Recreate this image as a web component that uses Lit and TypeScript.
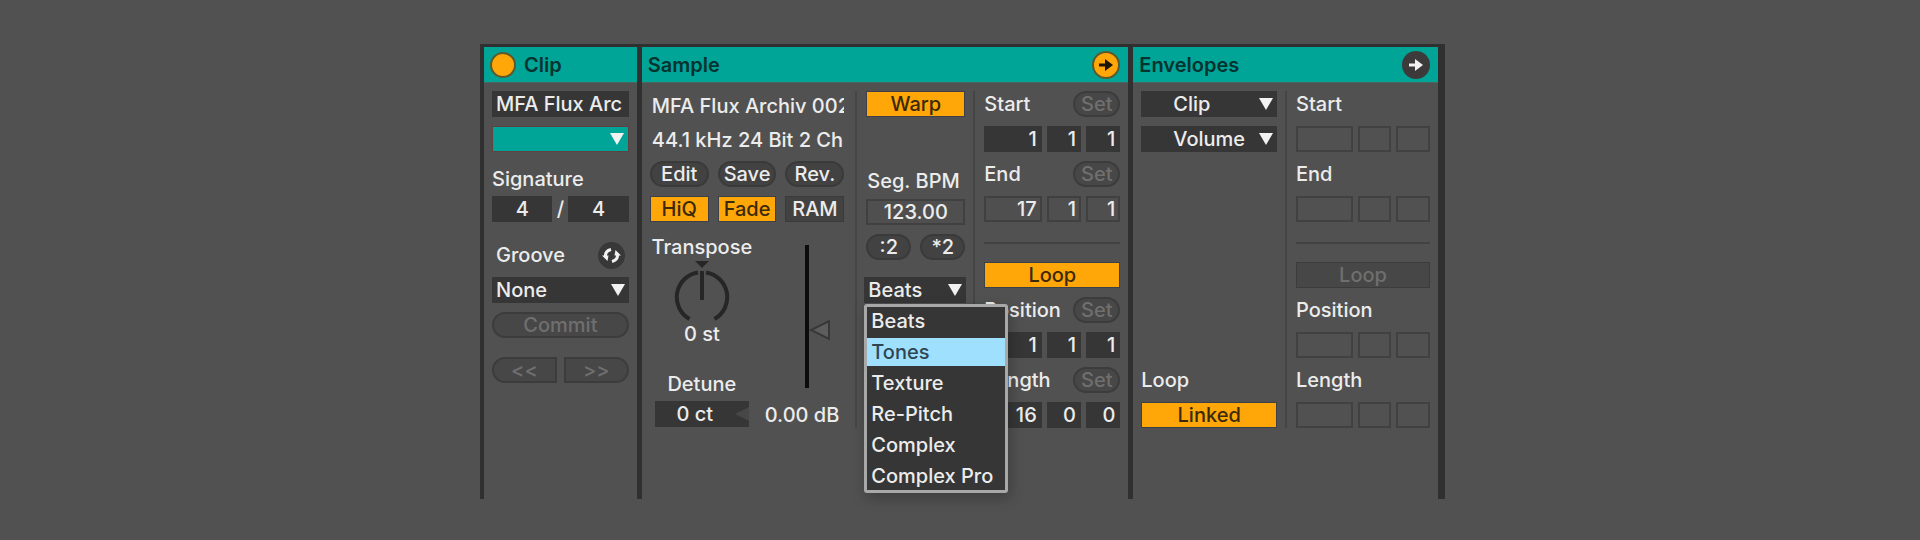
import { LitElement, html, css, svg, nothing } from "lit";
import { customElement, state } from "lit/decorators.js";

const WARP_MODES = ["Beats", "Tones", "Texture", "Re-Pitch", "Complex", "Complex Pro"];

const arrowDown = html`<svg class="arrow" viewBox="0 0 14 12" aria-hidden="true"><path d="M0 0h14L7 12z" fill="#f2f2f2" /></svg>`;

const arrowRight = (fill: string) =>
  svg`<path d="M7 12.500h6V8l8 6-8 6v-4.500H7z" fill=${fill} />`;

@customElement("app-root")
export class AppRoot extends LitElement {
  @state() private warpMode = "Beats";
  @state() private hovered = "Tones";
  @state() private menuOpen = true;

  static styles = css`
    :host {
      display: grid;
      grid-template-columns: minmax(0, 480fr) minmax(965px, 965fr) minmax(0, 475fr);
      box-sizing: border-box;
      min-height: 100vh;
      padding: 44px 0 41px;
      background: #515151;
      color: #ececec;
      font: 500 20px/26px Inter, "Liberation Sans", sans-serif;
    }
    * {
      box-sizing: border-box;
    }
    button, input, select {
      margin: 0;
      padding: 0;
      min-width: 0;
      border: 0;
      border-radius: 0;
      font: inherit;
      color: inherit;
      appearance: none;
    }
    .view {
      grid-column: 2;
      display: grid;
      grid-template-columns: minmax(0, 153fr) minmax(0, 487fr) minmax(0, 305fr);
      column-gap: 5px;
      padding: 3px 7px 0 4px;
      background: #303030;
      min-height: 455px;
    }
    .panel {
      display: flex;
      flex-direction: column;
      background: #515151;
    }
    .title {
      display: flex;
      align-items: center;
      gap: 8px;
      height: 36px;
      padding: 0 8px 0 6px;
      background: #00a597;
      border-bottom: 1px solid #4b6661;
      color: #05332f;
    }
    .title h2 {
      flex: 1;
      margin: 0;
      font: inherit;
      font-weight: 600;
    }
    .led {
      width: 26px;
      height: 26px;
      border: 2px solid #5c5a2c;
      border-radius: 50%;
      background: #ffa608;
    }
    .round {
      width: 28px;
      height: 28px;
      background: none;
    }
    .round svg {
      display: block;
      width: 100%;
      height: 100%;
    }
    .body {
      flex: 1;
      display: flex;
      align-items: flex-start;
      padding: 8px;
    }
    .col {
      display: flex;
      flex-direction: column;
      gap: 9px;
      flex: 1;
      min-width: 0;
    }
    .row {
      display: flex;
      align-items: center;
      justify-content: space-between;
      height: 26px;
    }
    .label {
      display: block;
      height: 26px;
      white-space: nowrap;
    }
    .rule-v {
      width: 2px;
      height: 337px;
      margin: 0 9px 0 8px;
      background: #454545;
      flex: none;
    }
    .rule-v.spaced {
      margin-left: 11px;
    }
    .rule-h {
      height: 2px;
      width: 100%;
      margin: 11px 0 9px;
      border: 0;
      background: #424242;
    }
    .field {
      height: 26px;
      width: 100%;
      background: #363636;
    }
    .name {
      padding-left: 4px;
    }
    .center {
      text-align: center;
    }
    .pair {
      display: grid;
      grid-template-columns: 1fr 16px 1fr;
      text-align: center;
    }
    .drop {
      display: grid;
      grid-template: 26px / 1fr;
      align-items: center;
      background: #363636;
    }
    .drop select, .drop .arrow {
      grid-area: 1 / 1;
    }
    .drop select {
      width: 100%;
      height: 26px;
      padding-left: 4px;
      background: none;
    }
    .drop.indent select {
      padding-left: 32px;
    }
    .drop.colour {
      background: #00a597;
      border: 1px solid #5c4242;
      grid-template-rows: 24px;
    }
    .drop.colour select {
      height: 24px;
    }
    .arrow {
      justify-self: end;
      width: 14px;
      height: 12px;
      margin-right: 4px;
      pointer-events: none;
    }
    .pill {
      height: 26px;
      line-height: 22px;
      border: 2px solid #3a3a3a;
      border-radius: 13px;
      background: #424242;
      text-align: center;
    }
    .pill:disabled, .toggle:disabled {
      color: #6f6f6f;
      background: #474747;
      border-color: #3c3c3c;
    }
    .set {
      width: 47px;
    }
    .toggle {
      height: 26px;
      line-height: 24px;
      border: 1px solid #3c4148;
      background: #ffa608;
      color: #3a2a08;
    }
    .toggle.off {
      background: #424242;
      border-color: #3a3a3a;
      color: #ececec;
    }
    .signature {
      margin-top: 5px;
      margin-bottom: -5px;
    }
    .groove {
      margin-top: 11px;
      padding-left: 4px;
    }
    .swap {
      width: 27px;
      height: 27px;
      margin-right: 4px;
    }
    .nudge {
      display: grid;
      grid-template-columns: 1fr 1fr;
      gap: 7px;
      margin-top: 10px;
    }
    .nudge .pill:first-child {
      border-radius: 13px 0 0 13px;
    }
    .nudge .pill:last-child {
      border-radius: 0 13px 13px 0;
    }
    .info {
      padding-left: 2px;
      overflow: hidden;
    }
    .infos {
      display: flex;
      flex-direction: column;
      gap: 8px;
      padding-top: 2px;
      margin-bottom: -1px;
    }
    .thirds {
      display: grid;
      grid-template-columns: repeat(3, 1fr);
      gap: 9px;
    }
    .tune {
      display: flex;
      justify-content: space-between;
      padding-top: 3px;
    }
    .pitch {
      display: flex;
      flex-direction: column;
      align-items: center;
      width: 104px;
    }
    .knob {
      width: 56px;
      height: 62px;
    }
    .value {
      line-height: 24px;
    }
    .detune-label {
      margin: 25px 0 4px;
    }
    .detune {
      display: grid;
      grid-template: 26px / 1fr;
      align-items: center;
      width: 94px;
      background: #363636;
    }
    .detune input, .detune svg {
      grid-area: 1 / 1;
    }
    .detune input {
      background: none;
      padding-right: 14px;
    }
    .detune svg {
      justify-self: end;
      width: 14px;
      height: 14px;
    }
    .gain {
      display: flex;
      flex-direction: column;
      align-items: flex-end;
      gap: 14px;
      padding: 11px 5px 0 0;
    }
    .fader {
      width: 35px;
      height: 143px;
      margin-right: 5px;
    }
    .warp {
      flex: 0 0 99px;
    }
    .bpm-label {
      margin-top: 42px;
      margin-bottom: -4px;
      padding-left: 1px;
    }
    .boxed {
      background: #4f4f4f;
      border: 2px solid #404040;
    }
    .halves {
      display: grid;
      grid-template-columns: 1fr 1fr;
      gap: 9px;
    }
    .mode {
      position: relative;
      margin: 8px -1px 0 -2px;
    }
    .menu {
      position: absolute;
      z-index: 2;
      top: 27px;
      left: 0;
      display: grid;
      gap: 3px;
      width: max-content;
      min-width: 144px;
      margin: 0;
      padding: 0;
      list-style: none;
      border: 3px solid #a8a8a8;
      border-radius: 3px;
      background: #363636;
      box-shadow: 2px 5px 14px rgba(0, 0, 0, 0.25);
    }
    .menu li {
      height: 28px;
      padding: 0 5px 0 4px;
      line-height: 28px;
      cursor: default;
    }
    .menu li.active {
      background: #a0e0ff;
      color: #2f4652;
    }
    .times {
      display: grid;
      grid-template-columns: 57fr 34fr 34fr;
      gap: 5px;
    }
    .times input {
      padding-right: 5px;
      text-align: right;
    }
    .times .boxed {
      padding-right: 3px;
    }
    .times .empty {
      background: none;
      border: 2px solid #414141;
    }
    .range {
      flex: 0 0 136px;
    }
    .range.narrow {
      flex-basis: 134px;
    }
    .bottom {
      margin-top: 206px;
    }
  `;

  private drop(label: string, value: string, extra = "") {
    return html`<div class="drop ${extra}">
      <select aria-label=${label}><option>${value}</option></select>${arrowDown}
    </div>`;
  }

  private times(label: string, values: string[], look = "") {
    const units = ["bars", "beats", "sixteenths"];
    return html`<div class="times">
      ${units.map((unit, i) => html`<input class="field ${look}" aria-label="${label} ${unit}" .value=${values[i] ?? ""} />`)}
    </div>`;
  }

  private heading(label: string, withSet: boolean) {
    return html`<div class="row">
      <span class="label">${label}</span>
      ${withSet ? html`<button class="pill set" disabled>Set</button>` : nothing}
    </div>`;
  }

  private pick(mode: string) {
    this.warpMode = mode;
    this.menuOpen = false;
  }

  private clipPanel() {
    return html`<section class="panel">
      <header class="title"><button class="led" aria-label="Activate clip"></button><h2>Clip</h2></header>
      <div class="body">
        <div class="col">
          <input class="field name" aria-label="Clip name" value="MFA Flux Arc" />
          ${this.drop("Clip colour", "", "colour")}
          <label class="label signature" for="numerator">Signature</label>
          <div class="pair">
            <input id="numerator" class="field center" value="4" /><span>/</span>
            <input class="field center" aria-label="Denominator" value="4" />
          </div>
          <div class="row groove">
            <span>Groove</span>
            <button class="round swap" aria-label="Hot-swap groove">
              <svg viewBox="0 0 27 27">
                <circle cx="13.5" cy="13.5" r="13.5" fill="#383838" />
                <path d="M7.500 15c-.5-4 1.500-6.500 5.500-7.500M19.500 12c.5 4-1.500 6.500-5.500 7.500" fill="none" stroke="#f2f2f2" stroke-width="3" />
                <path d="M4 13.500h6.500l-1 5.500zM23 13.500h-6.500l1-5.500z" fill="#f2f2f2" />
              </svg>
            </button>
          </div>
          ${this.drop("Groove", "None")}
          <button class="pill" disabled>Commit</button>
          <div class="nudge">
            <button class="pill" disabled>&lt;&lt;</button>
            <button class="pill" disabled>&gt;&gt;</button>
          </div>
        </div>
      </div>
    </section>`;
  }

  private samplePanel() {
    return html`<section class="panel">
      <header class="title">
        <h2>Sample</h2>
        <button class="round" aria-label="Show sample">
          <svg viewBox="0 0 28 28"><circle cx="14" cy="14" r="13" fill="#ffa608" stroke="#5c5a2c" stroke-width="2" />${arrowRight("#1c1405")}</svg>
        </button>
      </header>
      <div class="body">
        <div class="col">
          <div class="infos">
            <span class="label info">MFA Flux Archiv 002</span>
            <span class="label info">44.1 kHz 24 Bit 2 Ch</span>
          </div>
          <div class="thirds">
            <button class="pill">Edit</button><button class="pill">Save</button><button class="pill">Rev.</button>
          </div>
          <div class="thirds">
            <button class="toggle" aria-pressed="true">HiQ</button>
            <button class="toggle" aria-pressed="true">Fade</button>
            <button class="toggle off" aria-pressed="false">RAM</button>
          </div>
          <div class="tune">
            <div class="pitch">
              <span class="label">Transpose</span>
              <svg class="knob" viewBox="0 0 56 62" role="img" aria-label="Transpose knob">
                <path d="M21 1h14l-7 7z" fill="#262626" />
                <path d="M24 12.500A25 25 0 0 0 15.500 59M32 12.500A25 25 0 0 1 40.500 59" fill="none" stroke="#262626" stroke-width="4" />
                <path d="M28 11v29" stroke="#262626" stroke-width="4" />
              </svg>
              <span class="value">0 st</span>
              <label class="label detune-label" for="detune">Detune</label>
              <div class="detune">
                <input id="detune" class="field center" value="0 ct" />
                <svg viewBox="0 0 14 14"><path d="M14 0v14L0 7z" fill="#474747" /></svg>
              </div>
            </div>
            <div class="gain">
              <svg class="fader" viewBox="0 0 35 143" role="img" aria-label="Clip gain">
                <path d="M6 0h4v143H6z" fill="#0c0c0c" />
                <path d="M30 76v18L12 85z" fill="#5d5d5d" stroke="#383838" stroke-width="2" />
              </svg>
              <span class="label">0.00 dB</span>
            </div>
          </div>
        </div>
        <div class="rule-v spaced"></div>
        <div class="col warp">
          <button class="toggle" aria-pressed="true">Warp</button>
          <label class="label bpm-label" for="bpm">Seg. BPM</label>
          <input id="bpm" class="field boxed center" value="123.00" />
          <div class="halves"><button class="pill">:2</button><button class="pill">*2</button></div>
          <div class="mode">
            <div class="drop">
              <select aria-label="Warp mode" .value=${this.warpMode} @mousedown=${(e: Event) => {
                e.preventDefault();
                this.menuOpen = !this.menuOpen;
              }}>
                ${WARP_MODES.map((m) => html`<option ?selected=${m === this.warpMode}>${m}</option>`)}
              </select>${arrowDown}
            </div>
            ${this.menuOpen
              ? html`<ul class="menu" role="listbox" aria-label="Warp mode">
                  ${WARP_MODES.map((m) => html`<li role="option" aria-selected=${m === this.warpMode}
                    class=${m === this.hovered ? "active" : ""}
                    @mouseenter=${() => (this.hovered = m)}
                    @click=${() => this.pick(m)}>${m}</li>`)}
                </ul>`
              : nothing}
          </div>
        </div>
        <div class="rule-v"></div>
        <div class="col range">
          ${this.heading("Start", true)} ${this.times("Start", ["1", "1", "1"])}
          ${this.heading("End", true)} ${this.times("End", ["17", "1", "1"], "boxed")}
          <hr class="rule-h" />
          <button class="toggle" aria-pressed="true">Loop</button>
          ${this.heading("Position", true)} ${this.times("Position", ["1", "1", "1"])}
          ${this.heading("Length", true)} ${this.times("Length", ["16", "0", "0"])}
        </div>
      </div>
    </section>`;
  }

  private envelopesPanel() {
    return html`<section class="panel">
      <header class="title">
        <h2>Envelopes</h2>
        <button class="round" aria-label="Show envelopes">
          <svg viewBox="0 0 28 28"><circle cx="14" cy="14" r="14" fill="#3c3a3a" />${arrowRight("#f2f2f2")}</svg>
        </button>
      </header>
      <div class="body">
        <div class="col">
          ${this.drop("Device", "Clip", "indent")} ${this.drop("Control", "Volume", "indent")}
          <span class="label bottom">Loop</span>
          <button class="toggle" aria-pressed="true">Linked</button>
        </div>
        <div class="rule-v"></div>
        <div class="col range narrow">
          ${this.heading("Start", false)} ${this.times("Envelope start", [], "empty")}
          ${this.heading("End", false)} ${this.times("Envelope end", [], "empty")}
          <hr class="rule-h" />
          <button class="toggle" disabled>Loop</button>
          ${this.heading("Position", false)} ${this.times("Envelope position", [], "empty")}
          ${this.heading("Length", false)} ${this.times("Envelope length", [], "empty")}
        </div>
      </div>
    </section>`;
  }

  render() {
    return html`<main class="view">${this.clipPanel()} ${this.samplePanel()} ${this.envelopesPanel()}</main>`;
  }
}
